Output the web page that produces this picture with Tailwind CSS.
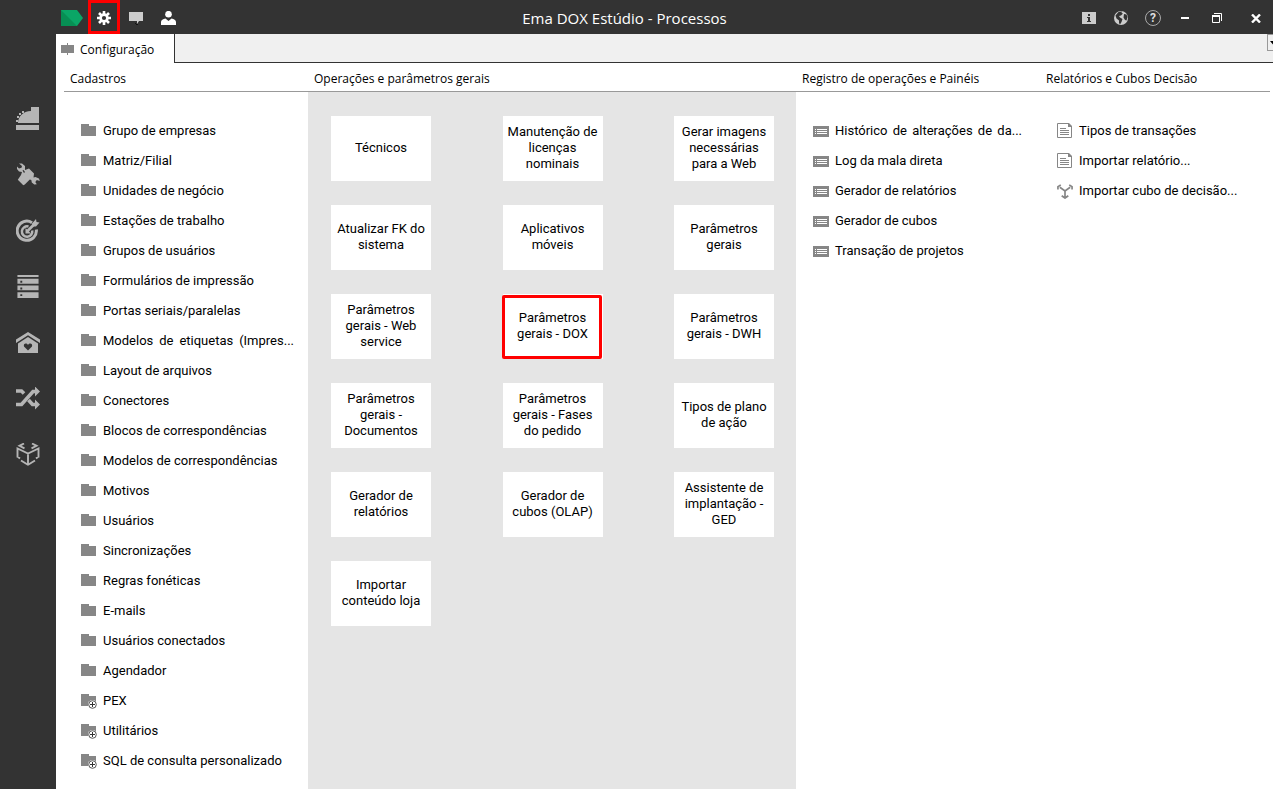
<!DOCTYPE html>
<html lang="pt-BR">
<head>
<meta charset="utf-8">
<title>Ema DOX Estúdio - Processos</title>
<script src="https://cdn.jsdelivr.net/npm/@tailwindcss/browser@4"></script>
</head>
<body class="flex min-h-screen flex-col bg-white font-['Roboto',sans-serif] text-[13px] leading-4 text-black">

<svg class="hidden" aria-hidden="true">
  <symbol id="folder" viewBox="0 0 16 16"><path fill="#868686" d="M0 1h8v2h7v10H0z"/></symbol>
  <symbol id="folder-plus" viewBox="0 0 16 16"><path fill="#868686" d="M0 1h8v2h7v10H0z"/><circle cx="11.5" cy="11.5" r="4.500" fill="#fff"/><circle cx="11.500" cy="11.500" r="3.800" fill="#fff" stroke="#555" stroke-width="1"/><path stroke="#333" d="M11.500 9v5M9 11.500h5"/></symbol>
  <symbol id="list" viewBox="0 0 16 16"><path fill="#868686" d="M0 3h16v11H0z"/><path stroke="#fff" d="M4 6.500h10M4 8.500h10M4 10.500h10M2 6.500h1M2 8.500h1M2 10.500h1"/></symbol>
  <symbol id="doc" viewBox="0 0 16 16"><path fill="#fff" stroke="#868686" d="M.5 .5h11l3 3v11H.5z"/><path fill="#868686" d="M11 0h1l3 3v1h-4z"/><path stroke="#868686" d="M3 5.500h6M3 7.500h9M3 9.500h9M3 11.500h9"/></symbol>
  <symbol id="cube-small" viewBox="0 0 17 17"><path fill="none" stroke="#868686" stroke-width="1.800" d="M1 7V4L4 2M16 7V4L13 2M3 4.500L8.500 8.500L14 4.500M8.500 8.500V15M5 13.500L8.500 16L12 13.500"/></symbol>
</svg>

<header class="flex h-[34px] shrink-0 items-center bg-[#333333] pl-14 text-white">
  <nav class="flex h-full [&_button]:flex [&_button]:h-full [&_button]:w-8 [&_button]:items-center [&_button]:justify-center" aria-label="Módulos">
    <button aria-label="Início"><svg width="22" height="16" viewBox="0 0 22 16" class="mt-0.5"><path fill="#0aa666" d="M0 0h16l6 8-6 8H0z"/><path fill="#078f54" d="M0 0l16 16H0z"/></svg></button>
    <button aria-label="Configuração" class="border-[3px] border-[#ff0000]"><svg class="mt-0.5 shrink-0" width="14" height="14" viewBox="0 0 14 14"><g stroke="#fff" stroke-width="2.600"><path d="M7 0v14M0 7h14M2 2l10 10M12 2L2 12"/></g><circle cx="7" cy="7" r="4.700" fill="#fff"/><circle cx="7" cy="7" r="2.100" fill="#333"/></svg></button>
    <button aria-label="Mensagens"><svg class="mt-0.5" width="14" height="14" viewBox="0 0 14 14"><path fill="#ccc" d="M0 1h14v9h-4l-2 3v-3H0z"/><path fill="#111" d="M6 12h1v1H6zM7 13h2v1H7z"/></svg></button>
    <button aria-label="Usuário"><svg class="mt-0.5" width="15" height="14" viewBox="0 0 15 14"><circle cx="7.500" cy="3.200" r="3.300" fill="#fff"/><path fill="#fff" d="M0 14v-3c0-2 2-3 4.500-3.500L7.500 10l3-2.500C13 8 15 9 15 11v3z"/></svg></button>
  </nav>
  <h1 class="flex-1 pr-2 pt-0.5 text-center font-['Open_Sans',sans-serif] text-[15px] leading-5">Ema DOX Estúdio - Processos</h1>
  <div class="flex h-full [&_button]:flex [&_button]:w-8 [&_button]:items-center [&_button]:justify-center [&_svg]:mt-0.5">
    <button aria-label="Informações"><svg width="14" height="12" viewBox="0 0 14 12"><path fill="#ccc" d="M0 0h14v12H0z"/><path fill="#333" d="M6 2h2v2H6zM5 5h3v4h1v1H5V9h1V6H5z"/></svg></button>
    <button aria-label="Idioma"><svg width="14" height="14" viewBox="0 0 14 14"><circle cx="7" cy="7" r="7" fill="#ccc"/><path fill="#333" d="M4.500 1L8 .5 7.500 2 9 2.500 7 4.500 5 5l1 1.500L8.500 8 7.500 11 6 13.500 5 12V9.500L2.500 7.500 1.500 4.500zM10 3l2.500.5L13.500 6l-1 3.500L11 9 9.500 6.500z"/></svg></button>
    <button aria-label="Ajuda"><span class="mt-0.5 flex size-4 items-center justify-center rounded-full border border-[#aaaaaa] text-xs font-bold text-[#dddddd]">?</span></button>
    <button aria-label="Minimizar"><svg width="8" height="2" viewBox="0 0 8 2"><path fill="#fff" d="M0 0h8v2H0z"/></svg></button>
    <button aria-label="Restaurar"><svg width="10" height="10" viewBox="0 0 10 10"><path fill="none" stroke="#fff" d="M2 .5h7.500V8M.5 3v6.500h7V3"/><path fill="#fff" d="M0 2h8v2H0z"/></svg></button>
    <button aria-label="Fechar" class="ml-2"><svg class="mr-0.5" width="10" height="9" viewBox="0 0 10 9"><path stroke="#fff" stroke-width="2.400" d="M1 .5l8 8M9 .5l-8 8"/></svg></button>
  </div>
</header>

<div class="flex flex-1">
  <aside class="w-14 shrink-0 bg-[#333333] pt-[57px] [&_button]:flex [&_button]:h-14 [&_button]:w-14 [&_button]:items-center [&_button]:justify-center [&_svg]:size-6 [&_svg]:fill-[#b5b5b5]">
    <button aria-label="Caixa"><svg viewBox="0 0 24 24"><path d="M0 18h23v5H0zM2 16c0-6 5-12 13-12V0h8v16z"/><path d="M0 13h2v2H0zM1 9h2v2H1zM3 6h2v2H3zM6 4h2v2H6z"/></svg></button>
    <button aria-label="Ferramentas"><svg viewBox="0 0 24 24"><path d="M3 .5l3 0 3 2.500V7l4-1.500 5 5-.5 4 2-.5 3.500 1.500.8 2.500-3-1-1.500 2 1.500 2.200-2.500.3-2.500-2-.5-2.500-1.500-.5-5 5-1.500.8-5.500-5.500L5 12l1-3-3-.5L1 6V3.500l2 2 2.500-.7L6 3z"/><path style="fill:#333" d="M6.500 7.500l1-.5 1.500 2-1 1z"/></svg></button>
    <button aria-label="Metas"><svg viewBox="0 0 24 24"><g fill="none" stroke="#b5b5b5"><path stroke-width="3" d="M16 3.700A9.600 9.600 0 1 0 20.300 10.500"/><path stroke-width="2.500" d="M12.500 7.500A5.200 5.200 0 1 0 16.200 11.500"/><path stroke-width="2.600" d="M11 12.500l8-8"/></g><path d="M16 4.500l4-4.500.5 3 3 .5L20 7.500h-3.500zM9.500 9v5.500H15z"/></svg></button>
    <button aria-label="Servidores"><svg viewBox="0 0 24 25"><path d="M1 0h22v2H1zM1 4h22v5H1zM1 11h22v5H1zM1 18h22v6H1z"/><path style="fill:#333" d="M4 6h2v2H4zM4 13h2v2H4zM4 20h2v2H4z"/></svg></button>
    <button aria-label="Casa"><svg viewBox="0 0 24 24"><path d="M12 1l12 7.500V12L12 4.200 0 12V8.500z"/><path d="M12 6l10 6.500V22H2v-9.500z"/><path style="fill:#333" d="M12 19.500l-4-4c-1-3 2.500-4 4-1.500 1.500-2.500 5-1.500 4 1.500z"/></svg></button>
    <button aria-label="Fluxos"><svg viewBox="0 0 24 24"><path fill="none" stroke="#b5b5b5" stroke-width="3.600" d="M0 4h5.500l2.500 2.500M0 17.500h5.500L17 4.500h3M12.500 13l4 4.500H20"/><path d="M19 -.5l5 5-5 5zM19 12.500l5 5-5 5z"/></svg></button>
    <button aria-label="Cubos"><svg viewBox="0 0 24 24"><path fill="none" stroke="#b5b5b5" stroke-width="1.900" d="M8 .5L3.500 2.800L8.500 5.300M16 .5L20.500 2.800L15.500 5.300M1.500 14.500V5.500L12 10.500L22.500 5.500V14.500M1.500 13.500L4 15.500M22.500 13.500L20 15.500M12 10V22.500M5 17.500L11.500 21.500M19 17.500L12.500 21.500"/></svg></button>
  </aside>

  <main class="flex min-w-0 flex-1 flex-col">
    <div class="flex h-[29px] shrink-0 bg-[#f0f0f0]" role="tablist">
      <button role="tab" aria-selected="true" class="flex w-[119px] items-center gap-1.5 border-r border-[#333333] bg-white pl-[5px] pt-0.5 font-['Open_Sans',sans-serif] text-xs"><svg class="-mt-px" width="13" height="14" viewBox="0 0 13 14"><path fill="#868686" d="M0 3h13v8H0zM6 1h1v12H6z"/></svg><span class="pt-px">Configuração</span></button>
      <div class="flex flex-1 justify-end overflow-hidden border-b border-[#333333]">
        <button aria-label="Mais abas" class="flex h-[17px] w-1.5 items-center overflow-hidden border-y border-l border-[#999999] pl-0.5"><svg class="shrink-0" width="7" height="4" viewBox="0 0 7 4"><path d="M0 0h7L3.500 4z"/></svg></button>
      </div>
    </div>

    <div class="grid flex-1 grid-cols-[244fr_488fr_244fr_230fr] pl-2 pr-[3px] [&_h2]:h-[29px] [&_h2]:border-b [&_h2]:border-[#999999] [&_h2]:pl-1.5 [&_h2]:pt-2 [&_h2]:font-['Open_Sans',sans-serif] [&_h2]:text-xs [&_h2]:leading-4 [&_a]:flex [&_a]:h-[30px] [&_a]:items-center [&_a]:whitespace-nowrap [&_a]:gap-1.5 [&_a>svg]:size-4 [&_a>svg]:shrink-0 [&_ul]:pl-[17px] [&_ul]:pt-6">
      <section class="min-w-0">
        <h2>Cadastros</h2>
        <ul>
          <li><a href="#"><svg><use href="#folder"/></svg>Grupo de empresas</a></li>
          <li><a href="#"><svg><use href="#folder"/></svg>Matriz/Filial</a></li>
          <li><a href="#"><svg><use href="#folder"/></svg>Unidades de negócio</a></li>
          <li><a href="#"><svg><use href="#folder"/></svg>Estações de trabalho</a></li>
          <li><a href="#"><svg><use href="#folder"/></svg>Grupos de usuários</a></li>
          <li><a href="#"><svg><use href="#folder"/></svg>Formulários de impressão</a></li>
          <li><a href="#"><svg><use href="#folder"/></svg>Portas seriais/paralelas</a></li>
          <li><a href="#" class="mr-3.5"><svg><use href="#folder"/></svg><span class="flex-1 [text-align-last:justify]">Modelos de etiquetas (Impres...</span></a></li>
          <li><a href="#"><svg><use href="#folder"/></svg>Layout de arquivos</a></li>
          <li><a href="#"><svg><use href="#folder"/></svg>Conectores</a></li>
          <li><a href="#"><svg><use href="#folder"/></svg>Blocos de correspondências</a></li>
          <li><a href="#"><svg><use href="#folder"/></svg>Modelos de correspondências</a></li>
          <li><a href="#"><svg><use href="#folder"/></svg>Motivos</a></li>
          <li><a href="#"><svg><use href="#folder"/></svg>Usuários</a></li>
          <li><a href="#"><svg><use href="#folder"/></svg>Sincronizações</a></li>
          <li><a href="#"><svg><use href="#folder"/></svg>Regras fonéticas</a></li>
          <li><a href="#"><svg><use href="#folder"/></svg>E-mails</a></li>
          <li><a href="#"><svg><use href="#folder"/></svg>Usuários conectados</a></li>
          <li><a href="#"><svg><use href="#folder"/></svg>Agendador</a></li>
          <li><a href="#"><svg><use href="#folder-plus"/></svg>PEX</a></li>
          <li><a href="#"><svg><use href="#folder-plus"/></svg>Utilitários</a></li>
          <li><a href="#"><svg><use href="#folder-plus"/></svg>SQL de consulta personalizado</a></li>
        </ul>
      </section>

      <section class="flex min-w-0 flex-col">
        <h2>Operações e parâmetros gerais</h2>
        <div class="grid flex-1 grid-cols-[100px_100px_100px] content-start justify-between gap-y-6 bg-[#e5e5e5] pl-[23px] pr-[22px] pt-6 [&_button]:h-[65px] [&_button]:bg-white [&_button]:px-1 [&_button]:pb-0.5">
          <button>Técnicos</button>
          <button>Manutenção de licenças nominais</button>
          <button>Gerar imagens necessárias para a Web</button>
          <button>Atualizar FK do sistema</button>
          <button>Aplicativos móveis</button>
          <button>Parâmetros gerais</button>
          <button>Parâmetros gerais - Web service</button>
          <button class="relative">Parâmetros<br>gerais - DOX<span class="absolute -left-px right-px top-px bottom-0 rounded-xs border-[3px] border-[#ff0000]"></span></button>
          <button>Parâmetros gerais - DWH</button>
          <button>Parâmetros gerais - Documentos</button>
          <button>Parâmetros gerais - Fases do pedido</button>
          <button>Tipos de plano de ação</button>
          <button>Gerador de relatórios</button>
          <button>Gerador de cubos (OLAP)</button>
          <button>Assistente de implantação - GED</button>
          <button>Importar conteúdo loja</button>
        </div>
      </section>

      <section class="min-w-0">
        <h2>Registro de operações e Painéis</h2>
        <ul>
          <li><a href="#" class="mr-[18px]"><svg><use href="#list"/></svg><span class="flex-1 [text-align-last:justify]">Histórico de alterações de da...</span></a></li>
          <li><a href="#"><svg><use href="#list"/></svg>Log da mala direta</a></li>
          <li><a href="#"><svg><use href="#list"/></svg>Gerador de relatórios</a></li>
          <li><a href="#"><svg><use href="#list"/></svg>Gerador de cubos</a></li>
          <li><a href="#"><svg><use href="#list"/></svg>Transação de projetos</a></li>
        </ul>
      </section>

      <section class="min-w-0">
        <h2>Relatórios e Cubos Decisão</h2>
        <ul>
          <li><a href="#"><svg><use href="#doc"/></svg>Tipos de transações</a></li>
          <li><a href="#"><svg><use href="#doc"/></svg>Importar relatório...</a></li>
          <li><a href="#"><svg><use href="#cube-small"/></svg>Importar cubo de decisão...</a></li>
        </ul>
      </section>
    </div>
  </main>
</div>
</body>
</html>
